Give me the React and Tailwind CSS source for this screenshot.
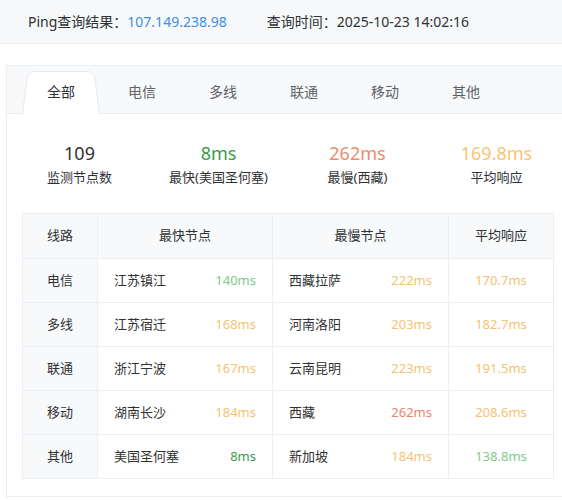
const font = { fontFamily: '"Noto Sans", "Noto Sans CJK SC", sans-serif' };

const tabs = ['全部', '电信', '多线', '联通', '移动', '其他'];

const stats = [
  { value: '109', label: '监测节点数', color: 'text-[#303133]' },
  { value: '8ms', label: '最快(美国圣何塞)', color: 'text-[#3b9a4c]' },
  { value: '262ms', label: '最慢(西藏)', color: 'text-[#ef8b6c]' },
  { value: '169.8ms', label: '平均响应', color: 'text-[#f7c473]' },
];

const green = 'text-[#7ecb8c]';
const darkGreen = 'text-[#3b9a4c]';
const orange = 'text-[#f5c274]';
const red = 'text-[#ea8570]';

const rows = [
  { line: '电信', fast: '江苏镇江', fastMs: '140ms', fastC: green, slow: '西藏拉萨', slowMs: '222ms', slowC: orange, avg: '170.7ms', avgC: orange },
  { line: '多线', fast: '江苏宿迁', fastMs: '168ms', fastC: orange, slow: '河南洛阳', slowMs: '203ms', slowC: orange, avg: '182.7ms', avgC: orange },
  { line: '联通', fast: '浙江宁波', fastMs: '167ms', fastC: orange, slow: '云南昆明', slowMs: '223ms', slowC: orange, avg: '191.5ms', avgC: orange },
  { line: '移动', fast: '湖南长沙', fastMs: '184ms', fastC: orange, slow: '西藏', slowMs: '262ms', slowC: red, avg: '208.6ms', avgC: orange },
  { line: '其他', fast: '美国圣何塞', fastMs: '8ms', fastC: darkGreen, slow: '新加坡', slowMs: '184ms', slowC: orange, avg: '138.8ms', avgC: green },
];

const ActiveTab = ({ label }) => (
  <div className="relative -mb-px h-[43px] w-[78px] flex items-center justify-center text-[14px] text-[#303133]">
    <svg className="absolute inset-0" width="78" height="43" viewBox="0 0 78 43">
      <path d="M0.5 43 L5 8 Q6 0.5 13 0.5 L65 0.5 Q72 0.5 73 8 L77.5 43" fill="#ffffff" stroke="#e6e9ee" />
    </svg>
    <span className="relative -mt-[2px]">{label}</span>
  </div>
);

export default function App() {
  return (
    <div className="w-[562px] h-[500px] overflow-hidden bg-white" style={font}>
      {/* top summary bar */}
      <div className="h-[44px] bg-[#f6f8fa] border-b border-[#eceef2] flex items-center pl-[28px] text-[14px] text-[#303133]">
        <span>Ping查询结果：</span>
        <span className="text-[#4090e0]">107.149.238.98</span>
        <span className="ml-[40px]">查询时间：2025-10-23 14:02:16</span>
      </div>

      <div className="mt-[21px] ml-[6px] w-[564px] border border-[#ebeef3] bg-white">
        {/* tabs */}
        <div className="h-[48px] bg-[#f7f9fb] border-b border-[#e8ebef] flex items-end pl-[15px] gap-[3px]">
          {tabs.map((t, i) =>
            i === 0 ? (
              <ActiveTab key={t} label={t} />
            ) : (
              <div key={t} className="h-[42px] w-[78px] flex items-center justify-center text-[14px] text-[#606266]">
                <span className="-mt-[2px]">{t}</span>
              </div>
            )
          )}
        </div>

        {/* stats */}
        <div className="grid grid-cols-4 px-[3px] pt-[27px] pb-[26px]">
          {stats.map((s) => (
            <div key={s.label} className="flex flex-col items-center">
              <div className={`text-[18px] leading-[24px] ${s.color}`}>{s.value}</div>
              <div className="mt-[2px] text-[13px] leading-[20px] text-[#303133]">{s.label}</div>
            </div>
          ))}
        </div>

        {/* table */}
        <div className="px-[15px] pb-[17px]">
          <table className="border-collapse table-fixed w-[531px] text-[13px] text-[#303133]">
            <colgroup>
              <col className="w-[75px]" />
              <col className="w-[175px]" />
              <col className="w-[176px]" />
              <col className="w-[105px]" />
            </colgroup>
            <thead>
              <tr className="h-[45px] bg-[#f7f9fb]">
                <th className="border border-[#ebeef3] font-normal">线路</th>
                <th className="border border-[#ebeef3] font-normal">最快节点</th>
                <th className="border border-[#ebeef3] font-normal">最慢节点</th>
                <th className="border border-[#ebeef3] font-normal">平均响应</th>
              </tr>
            </thead>
            <tbody>
              {rows.map((r) => (
                <tr key={r.line} className="h-[44px]">
                  <td className="border border-[#ebeef3] bg-[#f8f9fb] text-center">{r.line}</td>
                  <td className="border border-[#ebeef3] px-[16px]">
                    <div className="flex items-center justify-between">
                      <span>{r.fast}</span>
                      <span className={r.fastC}>{r.fastMs}</span>
                    </div>
                  </td>
                  <td className="border border-[#ebeef3] px-[16px]">
                    <div className="flex items-center justify-between">
                      <span>{r.slow}</span>
                      <span className={r.slowC}>{r.slowMs}</span>
                    </div>
                  </td>
                  <td className={`border border-[#ebeef3] text-center ${r.avgC}`}>{r.avg}</td>
                </tr>
              ))}
            </tbody>
          </table>
        </div>
      </div>
    </div>
  );
}
